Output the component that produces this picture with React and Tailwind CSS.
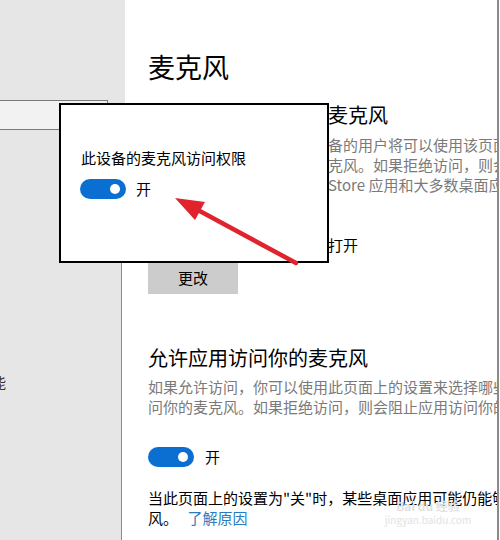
import React from "react";

const Toggle = () => (
  <div className="w-[46px] h-[20px] rounded-full bg-[#0a6fd0] flex items-center justify-end pr-[6px]">
    <div className="w-[10px] h-[10px] rounded-full bg-white" />
  </div>
);

export default function App() {
  return (
    <div className="relative w-[500px] h-[540px] overflow-hidden flex bg-white text-black font-['Noto_Sans_CJK_SC','Noto_Sans',sans-serif]">
      {/* Left nav */}
      <div className="w-[125px] flex flex-col">
        <div className="h-[100px] bg-[#e6e6e6]" />
        <div className="flex h-[30px] bg-[#e6e6e6]">
          <div className="w-[108px] bg-[#f2f2f2] border-y border-r border-[#7a7a7a]" />
        </div>
        <div className="flex flex-1">
          <div className="w-[122px] bg-[#e6e6e6] border-r-[1.5px] border-[#8a8a8a] overflow-hidden pt-[242px]">
            <div className="ml-[-8px] text-[14px] leading-[20px] text-[#333]">能</div>
          </div>
        </div>
      </div>

      {/* Main content */}
      <div className="flex-1 flex flex-col pl-[23px] pt-[49px] border-r-2 border-[#8a8a8a] overflow-hidden whitespace-nowrap">
        <h1 className="text-[27px] leading-[36px]">麦克风</h1>

        <h2 className="mt-[16px] text-[20px] leading-[28px]">允许访问此设备上的麦克风</h2>
        <div className="mt-[6px] text-[15px] leading-[20px] text-[#7a7a7a]">
          <p>如果允许访问，则使用此设备的用户将可以使用该页面上的设置</p>
          <p>设置来选择应用能否访问麦克风。如果拒绝访问，则会阻止</p>
          <p>
            <span className="inline-block w-[180px]">阻止 Microsoft</span>Store 应用和大多数桌面应用
          </p>
        </div>
        <p className="mt-[40px] text-[15px] leading-[20px]">此设备的麦克风访问权限已打开</p>
        <button className="mt-[7px] w-[90px] h-[32px] bg-[#cccccc] text-[15px]">更改</button>

        <h2 className="mt-[50px] text-[20px] leading-[28px]">允许应用访问你的麦克风</h2>
        <div className="mt-[5px] text-[15px] leading-[20px] text-[#7a7a7a]">
          <p>如果允许访问，你可以使用此页面上的设置来选择哪些应用</p>
          <p>问你的麦克风。如果拒绝访问，则会阻止应用访问你的麦克风</p>
        </div>
        <div className="mt-[30px] flex items-center gap-[11px]">
          <Toggle />
          <span className="text-[15px] leading-[20px]">开</span>
        </div>
        <div className="mt-[21px] text-[15px] leading-[20px]">
          <p>当此页面上的设置为"关"时，某些桌面应用可能仍能够访问麦克</p>
          <p>
            风。 <span className="ml-[6px] text-[#2a7ac0]">了解原因</span>
          </p>
        </div>
      </div>
      <div className="w-[1px]" />

      {/* Popup callout */}
      <div className="absolute left-[59px] top-[103px] w-[270px] h-[160px] border-2 border-black bg-white pt-[43px] pl-[20px]">
        <p className="text-[15px] leading-[20px]">此设备的麦克风访问权限</p>
        <div className="mt-[11px] ml-[-1px] flex items-center gap-[10px]">
          <Toggle />
          <span className="text-[15px] leading-[20px]">开</span>
        </div>
      </div>

      {/* Watermark */}
      <div className="absolute left-[383px] top-[499px] w-[90px] flex flex-col items-center text-[#e2e2e2] pointer-events-none">
        <span className="text-[12px] leading-[14px] font-bold">Bai du 经验</span>
        <span className="mt-[1px] text-[10px] leading-[12px]">jingyan.baidu.com</span>
      </div>

      {/* Red arrow */}
      <svg className="absolute left-0 top-0 pointer-events-none" width="500" height="540" viewBox="0 0 500 540">
        <line x1="196" y1="209" x2="296" y2="263" stroke="#e0232d" strokeWidth="4.5" strokeLinecap="round" />
        <polygon points="175,198 205,202 195,220" fill="#e0232d" />
      </svg>
    </div>
  );
}
